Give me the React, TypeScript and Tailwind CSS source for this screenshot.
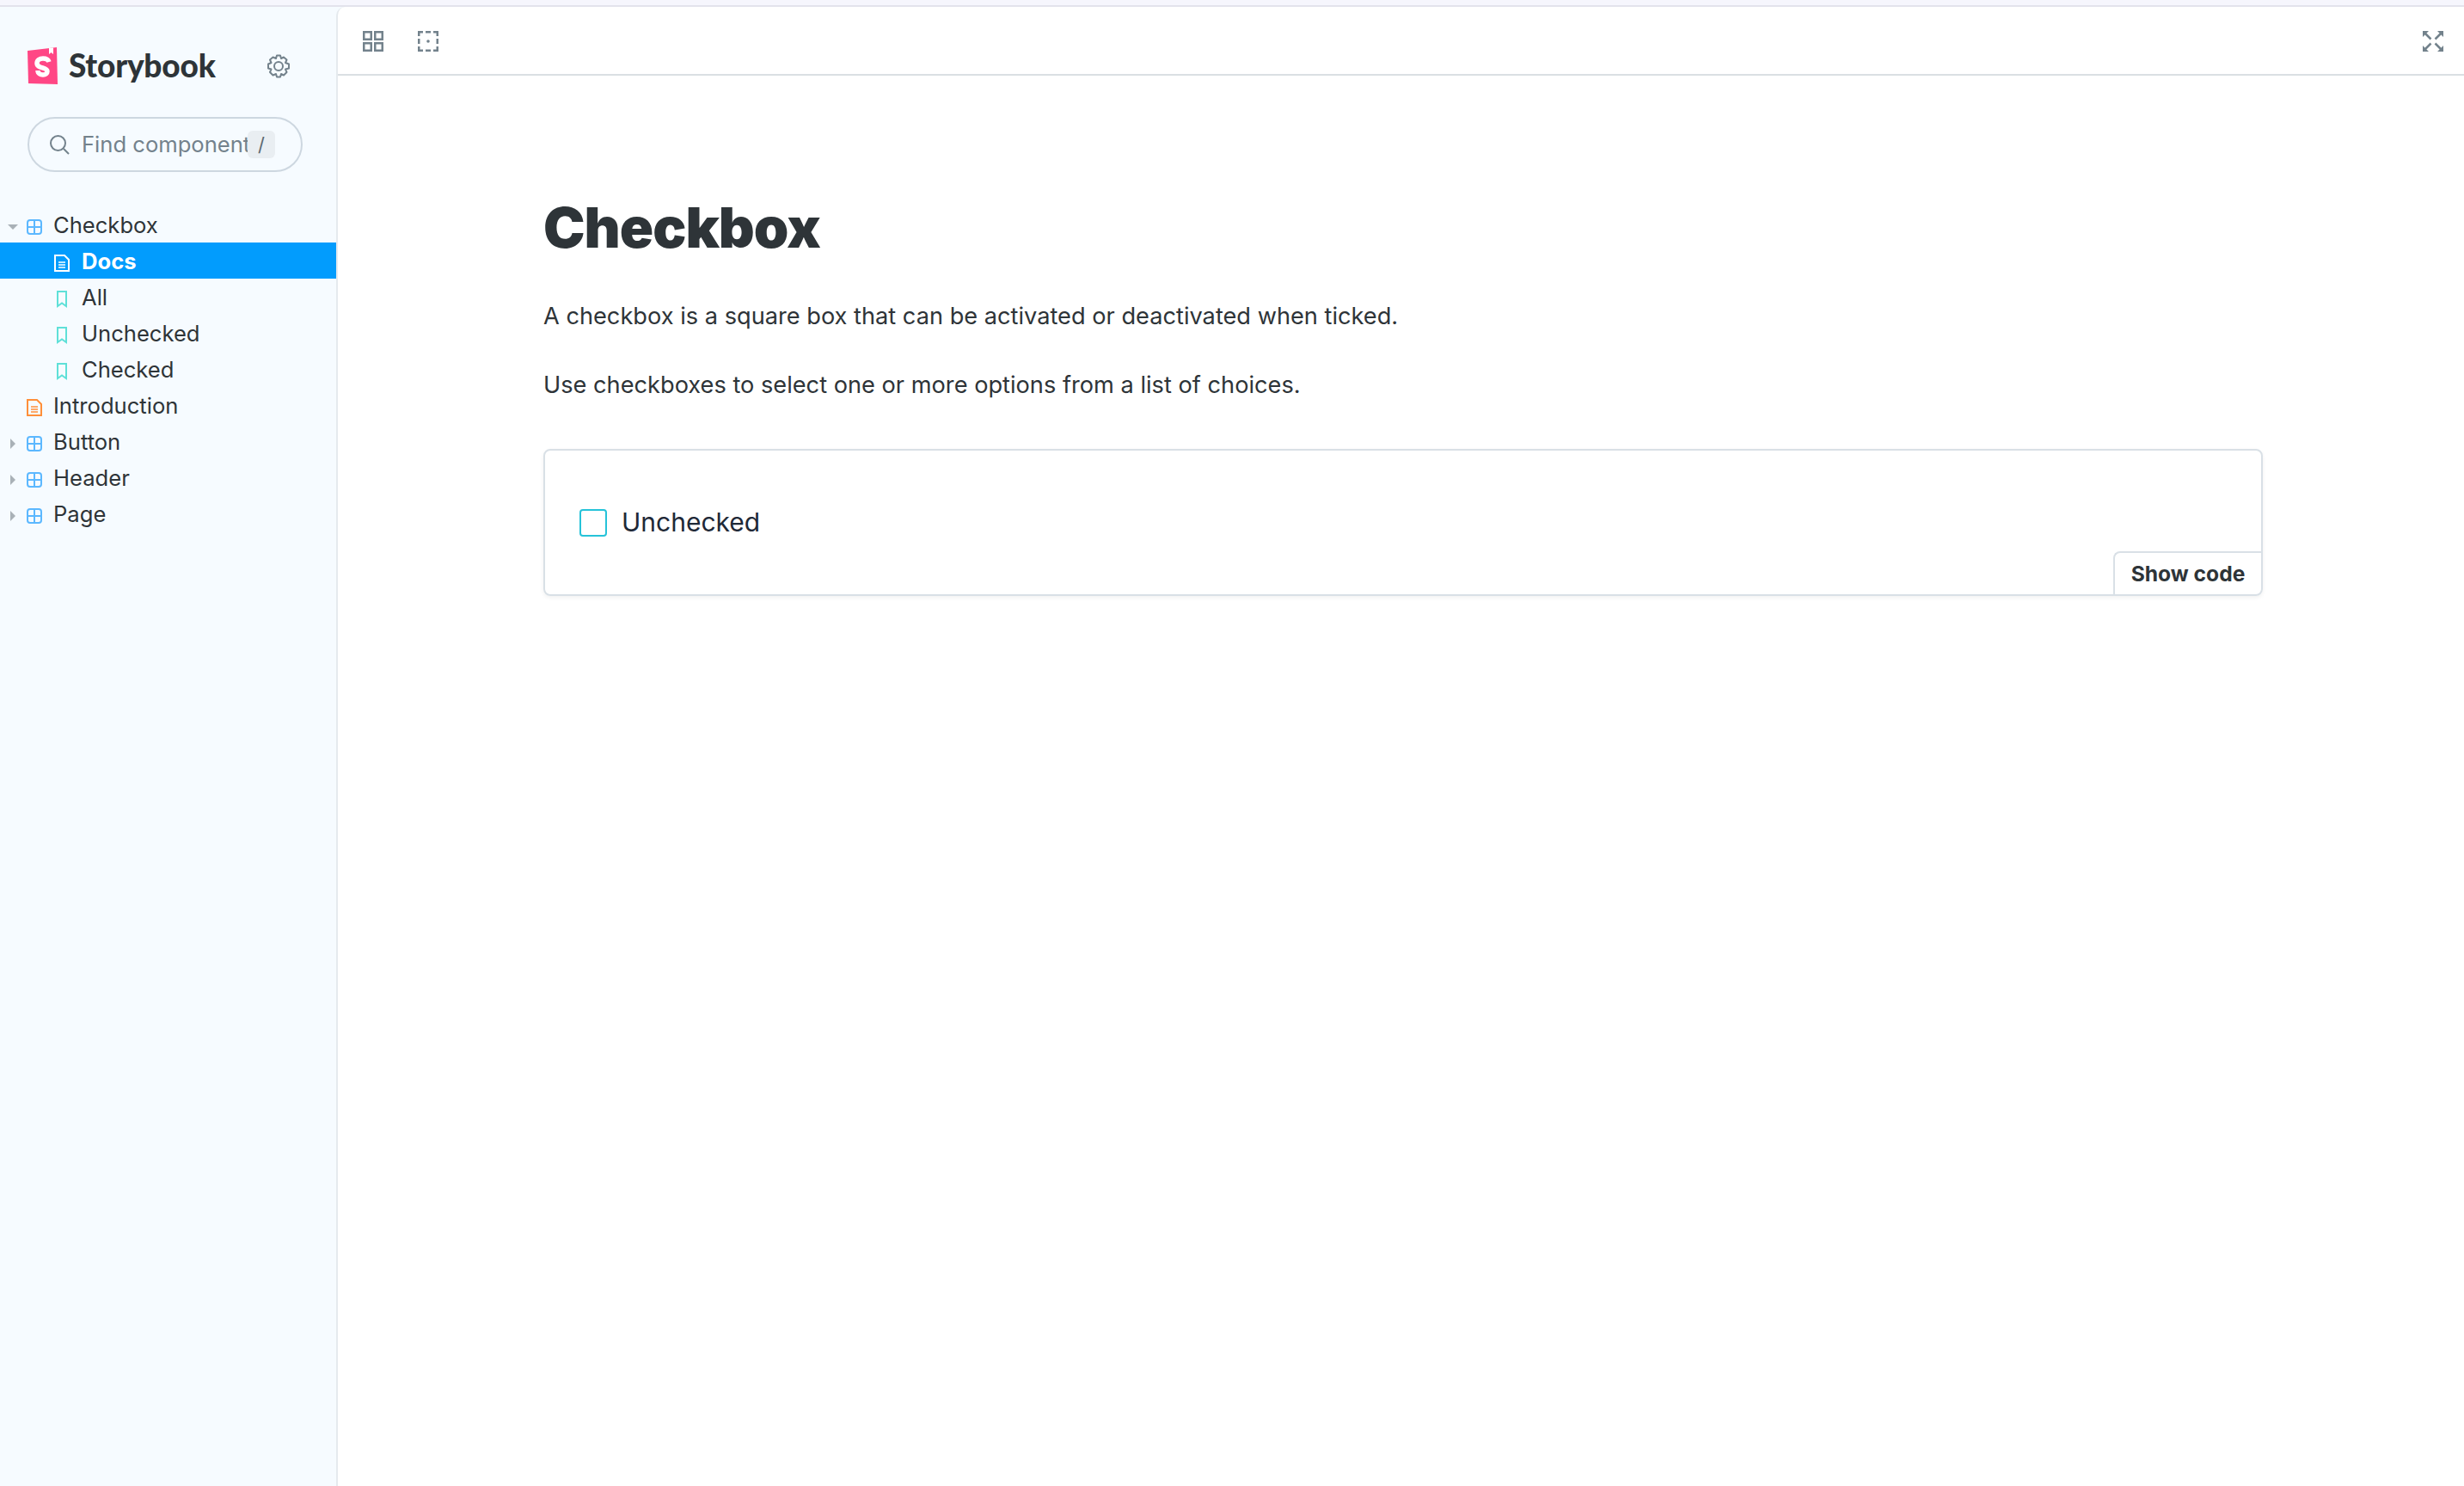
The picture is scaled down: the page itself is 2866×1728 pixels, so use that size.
import React from "react";

const BLUE = "#5cb8ff";

const ComponentIcon = () => (
  <svg width="18" height="18" viewBox="0 0 18 18" fill="none" stroke={BLUE} strokeWidth="2" className="shrink-0">
    <rect x="1" y="1" width="16" height="16" rx="3" />
    <path d="M9 1v16M1 9h16" />
  </svg>
);

const DocIcon = ({ color }: { color: string }) => (
  <svg width="18" height="20" viewBox="0 0 18 20" fill="none" stroke={color} strokeWidth="2" className="shrink-0">
    <path d="M1 1h11l5 5v13H1z" />
    <path d="M5 9h8M5 12h8M5 15h8" strokeWidth="1.600" />
  </svg>
);

const BookmarkIcon = () => (
  <svg width="12" height="20" viewBox="0 0 12 20" fill="none" stroke="#5fe0d8" strokeWidth="2" className="shrink-0">
    <path d="M1 1h10v17l-5-3.500L1 18z" />
  </svg>
);

const Caret = ({ open }: { open?: boolean }) => (
  <svg width="14" height="14" viewBox="0 0 14 14" fill="#a9b1b7" className="shrink-0">
    {open ? <path d="M1 4h12L7 10z" /> : <path d="M4 1l6 6-6 6z" />}
  </svg>
);

const TopRow = ({ label, kind, open }: { label: string; kind: "component" | "doc"; open?: boolean }) => (
  <div className="h-[42px] flex items-center pl-[8px] text-[25.6px] text-[#2e3438]">
    <div className="w-[14px] mr-[9px] mt-[6px] flex">{kind === "component" && <Caret open={open} />}</div>
    <div className="w-[18px] mr-[13px] mt-[6px] flex">{kind === "component" ? <ComponentIcon /> : <DocIcon color="#ff8f3a" />}</div>
    <span className="mt-[2px]">{label}</span>
  </div>
);

const ChildRow = ({ label, active }: { label: string; active?: boolean }) => (
  <div
    className={
      active
        ? "h-[42px] flex items-center pl-[63px] text-[25.6px] font-bold text-white bg-[#029cfd]"
        : "h-[42px] flex items-center pl-[63px] text-[25.6px] text-[#2e3438]"
    }
  >
    <div className="w-[18px] mr-[14px] mt-[6px] flex justify-center">{active ? <DocIcon color="#ffffff" /> : <BookmarkIcon />}</div>
    <span className="mt-[2px]">{label}</span>
  </div>
);

const Sidebar = () => (
  <div className="w-[391px] shrink-0 bg-[#f6fbff] font-['Inter',sans-serif]">
    <div className="flex items-center h-[46px] mt-[46px] pl-[32px]">
      <svg width="36" height="44" viewBox="0 0 36 44" className="shrink-0">
        <path d="M0 4L34 0 35 43 1 42z" fill="#ff4785" />
        <path d="M25 1v7l2.500-2 2.500 2V0.500z" fill="#ffffff" />
        <path
          d="M25 17c-1-3-3-4-7-4-4 0-7 2-7 5.500 0 6.500 12 4.500 12 9.500 0 2.500-2 4-5 4-3 0-6-1.500-6-5"
          fill="none"
          stroke="#ffffff"
          strokeWidth="5.500"
        />
      </svg>
      <span className="ml-[12px] -mt-[3px] text-[37px] font-black tracking-[-0.2px] text-[#2e3438] font-['Lato',sans-serif]">Storybook</span>
      <svg width="28" height="28" viewBox="0 0 28 28" fill="none" stroke="#73828c" strokeWidth="2" className="ml-auto mr-[53px] shrink-0">
        <circle cx="14" cy="14" r="5" />
        <path d="M12 1.500h4l1 3.500 3-1.500 3.500 3-1.500 3.500 4 1.500v5l-4 1 1.500 3.500-3.500 3.500-3-1.500-1 3.500h-4l-1-3.500-3.500 1.500-3.500-3.500 1.500-3.500-3.500-1v-5l3.500-1.500-1.500-3.500 3.500-3 3.500 1.500z" strokeLinejoin="round" />
      </svg>
    </div>
    <div className="mt-[36px] ml-[32px] w-[320px] h-[64px] rounded-full border-2 border-[#cdd7e0] flex items-center pl-[23px] pr-[30px]">
      <svg width="24" height="24" viewBox="0 0 24 24" fill="none" stroke="#73828c" strokeWidth="2" className="shrink-0">
        <circle cx="10.500" cy="10.500" r="8.500" />
        <path d="M17 17l6 6" />
      </svg>
      <span className="ml-[14px] mt-[1px] w-[193px] overflow-hidden whitespace-nowrap text-[25.6px] text-[#73828c]">Find components</span>
      <span className="w-[32px] h-[32px] shrink-0 rounded-[6px] bg-[#e9eef2] flex items-center justify-center text-[22px] text-[#5c6870]">/</span>
    </div>
    <div className="mt-[40px]">
      <TopRow label="Checkbox" kind="component" open />
      <ChildRow label="Docs" active />
      <ChildRow label="All" />
      <ChildRow label="Unchecked" />
      <ChildRow label="Checked" />
      <TopRow label="Introduction" kind="doc" />
      <TopRow label="Button" kind="component" />
      <TopRow label="Header" kind="component" />
      <TopRow label="Page" kind="component" />
    </div>
  </div>
);

const Toolbar = () => (
  <div className="h-[80px] border-b-2 border-[#dadfe3] flex items-center pt-[2px] pl-[29px] pr-[24px]">
    <svg width="24" height="24" viewBox="0 0 24 24" fill="none" stroke="#73828c" strokeWidth="2.500">
      <rect x="1.250" y="1.250" width="8.500" height="8.500" />
      <rect x="14.250" y="1.250" width="8.500" height="8.500" />
      <rect x="1.250" y="14.250" width="8.500" height="8.500" />
      <rect x="14.250" y="14.250" width="8.500" height="8.500" />
    </svg>
    <svg width="24" height="24" viewBox="0 0 24 24" fill="none" stroke="#73828c" strokeWidth="2.500" className="ml-[40px]">
      <path d="M1.250 6V1.250H6M9 1.250h6M18 1.250h4.750V6M22.750 9v6M22.750 18v4.750H18M15 22.750H9M6 22.750H1.250V18M1.250 15V9" />
      <circle cx="12" cy="12" r="1.800" fill="#73828c" stroke="none" />
    </svg>
    <svg width="24" height="24" viewBox="0 0 24 24" fill="none" stroke="#73828c" strokeWidth="2.500" className="ml-auto">
      <path d="M2 2l7.500 7.500M22 2l-7.500 7.500M2 22l7.500-7.500M22 22l-7.500-7.500" />
      <path d="M0 0h7l-7 7zM24 0v7l-7-7zM0 24v-7l7 7zM24 24h-7l7-7z" fill="#73828c" stroke="none" />
    </svg>
  </div>
);

const Docs = () => (
  <div className="pl-[239px] pt-[139px] w-[2239px]">
    <h1 className="text-[65px] leading-[76px] font-black tracking-[-1px] text-[#2e3438]">Checkbox</h1>
    <p className="mt-[45px] text-[27.2px] leading-[40px] text-[#2e3438]">A checkbox is a square box that can be activated or deactivated when ticked.</p>
    <p className="mt-[40px] text-[27.2px] leading-[40px] text-[#2e3438]">Use checkboxes to select one or more options from a list of choices.</p>
    <div className="relative mt-[54px] h-[171px] rounded-[8px] border-2 border-[#d9e0e6] shadow-[0_2px_5px_rgba(0,0,0,0.06)] flex items-center pl-[40px]">
      <div className="w-[32px] h-[32px] rounded-[4px] border-2 border-[#26c3d9]" />
      <span className="ml-[17px] text-[30px] text-[#1f2937]">Unchecked</span>
      <div className="absolute right-0 bottom-0 w-[172px] h-[50px] border-l-2 border-t-2 border-[#d9e0e6] rounded-tl-[8px] flex items-center justify-center text-[24.600px] font-bold text-[#2e3438]">
        Show code
      </div>
    </div>
  </div>
);

export default function App() {
  return (
    <div className="w-[2866px] h-[1728px] overflow-hidden bg-[#f6fbff] font-['Inter',sans-serif]">
      <div className="h-[8px] bg-[#f6f6fd] border-b-2 border-[#e3e3ec]" />
      <div className="flex h-[1720px]">
        <Sidebar />
        <div className="flex-1 bg-white border-l-2 border-[#e5eaee] rounded-tl-[10px]">
          <Toolbar />
          <Docs />
        </div>
      </div>
    </div>
  );
}
